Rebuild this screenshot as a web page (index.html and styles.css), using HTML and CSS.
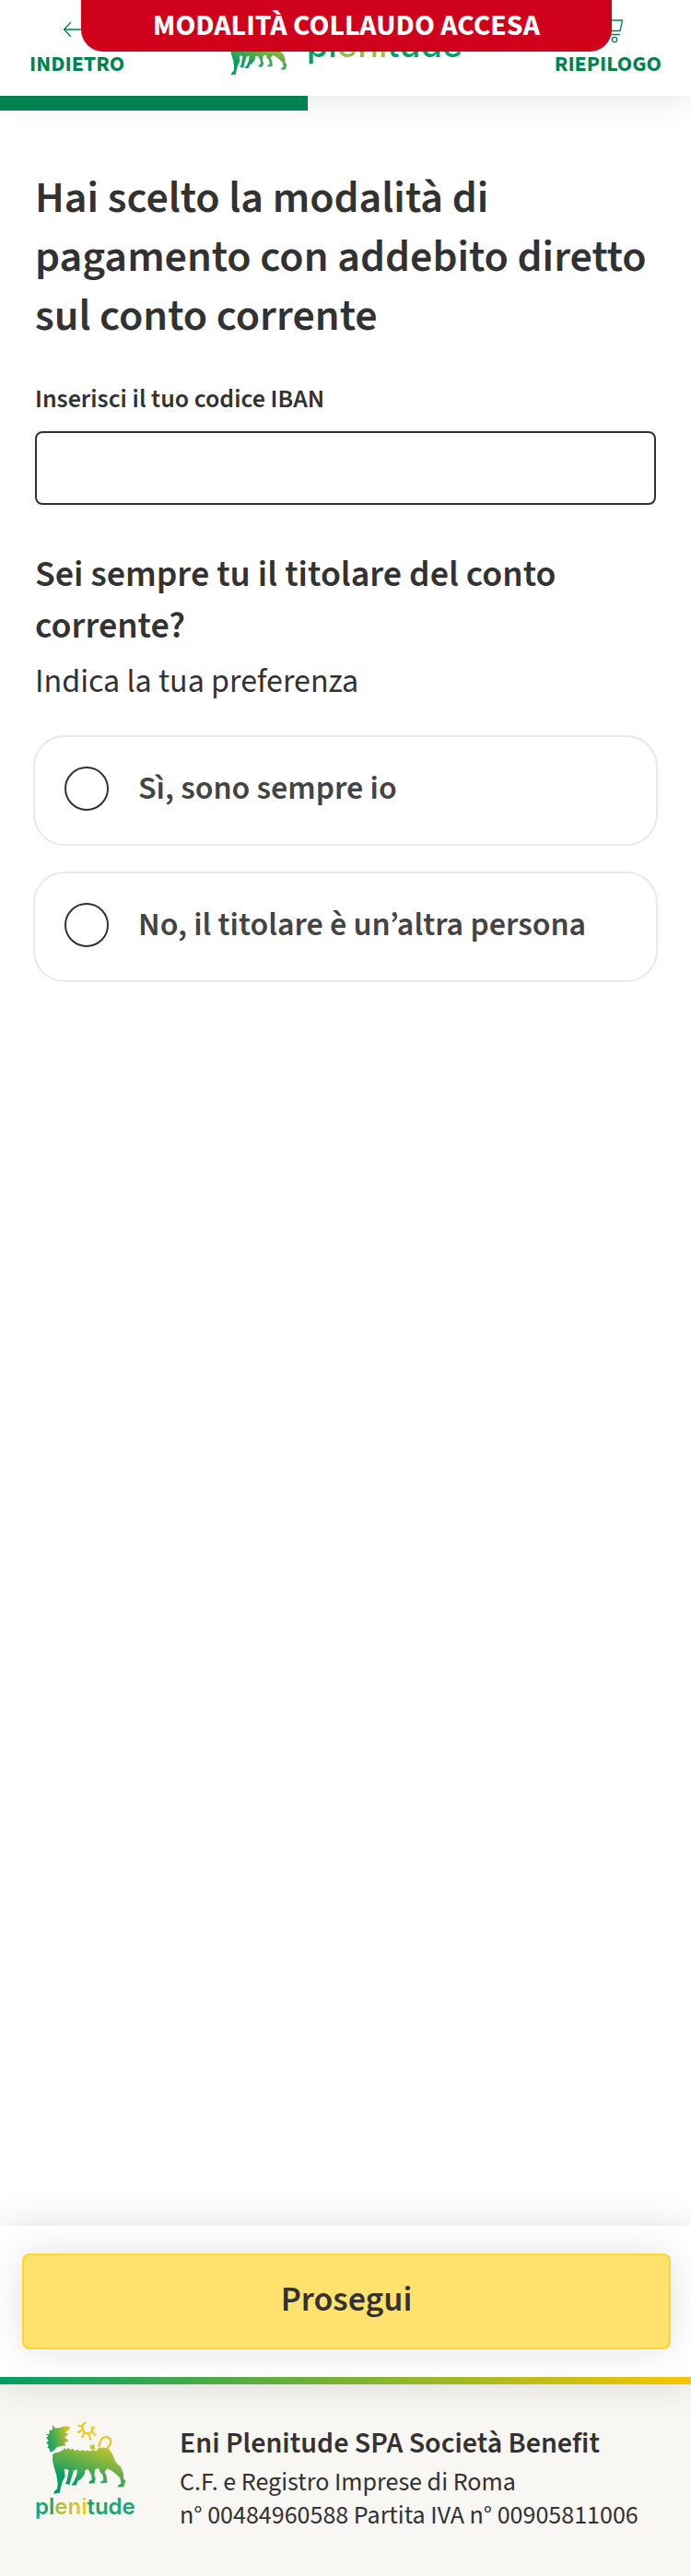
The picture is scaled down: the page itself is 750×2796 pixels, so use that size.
FILE: index.html
```html
<!DOCTYPE html>
<html lang="it">
<head>
<meta charset="utf-8">
<meta name="viewport" content="width=device-width, initial-scale=1">
<title>Plenitude - Modalità di pagamento</title>
<link rel="stylesheet" href="styles.css">
</head>
<body>
<svg class="defs" aria-hidden="true">
  <defs>
    <linearGradient id="body-fill" gradientUnits="userSpaceOnUse" x1="165" y1="275" x2="215" y2="135">
      <stop offset="0" stop-color="#009f65"/><stop offset=".35" stop-color="#4caa52"/><stop offset="1" stop-color="#c9c626"/>
    </linearGradient>
    <linearGradient id="head-fill" gradientUnits="userSpaceOnUse" x1="88" y1="140" x2="165" y2="115">
      <stop offset="0" stop-color="#14a061"/><stop offset=".4" stop-color="#5cae4e"/><stop offset="1" stop-color="#dcc820"/>
    </linearGradient>
    <linearGradient id="flame-fill" gradientUnits="userSpaceOnUse" x1="190" y1="130" x2="245" y2="90">
      <stop offset="0" stop-color="#e0ca2a"/><stop offset="1" stop-color="#f6cd2a"/>
    </linearGradient>
    <symbol id="dog" viewBox="50 80 310 245">
      <path fill="url(#body-fill)" d="M107 190L113 184L128 181L142 174L146 167L152 173L160 167L164 174L174 170L180 177L190 173L196 178L206 174L212 179L222 175L230 178L240 174L250 178L258 168L276 166L292 170L304 190L314 214L332 232L339 250L340 268L347 276L342 290L340 296L320 296L324 289L332 284L328 266L316 254L298 240L286 236L278 246L284 260L286 282L264 284L266 277L274 274L272 258L262 246L258 234L246 238L244 258L248 268L244 284L226 284L228 277L236 272L234 256L224 238L214 240L212 254L202 268L190 276L184 290L168 290L178 276L186 256L188 238L176 242L170 262L166 274L164 288L148 286L154 274L160 240L146 236L148 262L140 276L134 296L130 316L110 318L114 308L122 302L124 286L120 258L112 232L107 210Z"/>
      <path fill="url(#head-fill)" d="M107 92L116 103L130 101L144 97L158 97L165 101L160 108L148 118L160 120L154 128L146 134L156 140L158 146L146 150L150 160L132 162L120 166L112 176L98 182L98 172L90 166L94 158L86 150L94 144L86 134L94 128L85 124L98 120L96 110L106 108Z"/>
      <path fill="none" stroke="#e3c92a" stroke-width="7" d="M259 166C262 142 271 132 282 132C299 132 305 152 286 168"/>
      <path fill="#b9c22f" d="M229 156L237 160L245 154L244 163L248 172L232 172Z"/>
      <path fill="none" stroke="url(#flame-fill)" stroke-width="7" d="M207 88C201 106 209 120 222 120C236 120 242 108 234 98M190 94L206 98M207 90L217 84M188 117L206 109M203 134L213 116M232 142L226 120M249 127L236 115M245 98L237 108"/>
    </symbol>
  </defs>
</svg>

<header class="header">
  <a class="nav-link" href="#indietro">
    <svg class="nav-icon" viewBox="0 0 32 32" aria-hidden="true"><path d="M31 16H2M9 8L1.500 16L9 24"/></svg>
    <span>INDIETRO</span>
  </a>
  <a class="brand" href="#home" aria-label="Plenitude">
    <svg class="brand-dog" aria-hidden="true"><use href="#dog"/></svg>
    <span class="brand-name">pl<span class="brand-mid">eni</span>tude</span>
  </a>
  <a class="nav-link" href="#riepilogo">
    <svg class="nav-icon" viewBox="0 0 32 32" aria-hidden="true"><path d="M0 2H5L6.500 6H31.500L29 17.500H11L6.500 6M11 17.500L9 21.500H29"/><circle cx="23" cy="27" r="2.700"/><circle cx="13" cy="27" r="2.700"/></svg>
    <span>RIEPILOGO</span>
  </a>
  <div class="test-banner">MODALITÀ COLLAUDO ACCESA</div>
</header>
<div class="progress"><div class="progress-value"></div></div>

<main class="content">
  <h1 class="title">Hai scelto la modalità di pagamento con addebito diretto sul conto corrente</h1>
  <label class="field-label" for="iban">Inserisci il tuo codice IBAN</label>
  <input class="field" id="iban" type="text" autocomplete="off">
  <h2 class="question" id="question">Sei sempre tu il titolare del conto corrente?</h2>
  <p class="hint">Indica la tua preferenza</p>
  <div class="options" role="radiogroup" aria-labelledby="question">
    <label class="option"><input class="option-radio" type="radio" name="owner" value="si"><span>Sì, sono sempre io</span></label>
    <label class="option"><input class="option-radio" type="radio" name="owner" value="no"><span>No, il titolare è un’altra persona</span></label>
  </div>
</main>

<div class="action-bar">
  <div class="action-inner"><button class="submit" type="button">Prosegui</button></div>
  <div class="action-stripe"></div>
</div>

<footer class="footer">
  <div class="footer-logo">
    <svg class="footer-dog" aria-hidden="true"><use href="#dog"/></svg>
    <span class="footer-name">pl<span class="brand-mid">eni</span>tude</span>
  </div>
  <div>
    <p class="company">Eni Plenitude SPA Società Benefit</p>
    <p class="company-info">C.F. e Registro Imprese di Roma<br>n° 00484960588 Partita IVA n° 00905811006</p>
  </div>
</footer>
</body>
</html>
```
FILE: styles.css
```css
:root {
  --ink: #323232;
  --green: #008350;
  --shadow: 0 0 40px rgba(0, 0, 0, .12);
}
* { box-sizing: border-box; }
body {
  margin: 0;
  min-height: 100vh;
  display: flex;
  flex-direction: column;
  background: #fff;
  color: var(--ink);
  font-family: "Source Sans 3", "Source Sans Pro", "Noto Sans CJK KR", sans-serif;
}
h1, h2, p { margin: 0; }
.defs { position: absolute; width: 0; height: 0; }

.header {
  position: relative;
  z-index: 1;
  display: flex;
  justify-content: space-between;
  align-items: flex-start;
  height: 104px;
  padding: 16px 32px 0;
  background: #fff;
  box-shadow: var(--shadow);
}
.nav-link {
  display: flex;
  flex-direction: column;
  align-items: center;
  gap: 6px;
  color: var(--green);
  font-size: 24px;
  font-weight: 700;
  line-height: 32px;
  text-decoration: none;
}
.nav-icon {
  width: 32px;
  height: 32px;
  fill: none;
  stroke: currentColor;
  stroke-width: 1.3;
}
.brand {
  display: flex;
  align-items: flex-start;
  gap: 18px;
  padding-top: 4px;
  text-decoration: none;
}
.brand-dog { width: 80px; height: 63px; }
.brand-name {
  padding-top: 4px;
  color: #009f65;
  font: 500 38px/48px Inter, sans-serif;
}
.brand-mid {
  color: transparent;
  background: linear-gradient(90deg, #8db84a, #b2bd3a);
  background-clip: text;
}
.test-banner {
  position: absolute;
  top: 0;
  left: 88px;
  right: 86px;
  height: 56px;
  border-radius: 0 0 24px 24px;
  background: #d0021b;
  color: #fff;
  font-size: 32px;
  font-weight: 700;
  line-height: 56px;
  text-align: center;
}
.progress { height: 16px; position: relative; z-index: 1; }
.progress-value { width: 44.5%; height: 100%; background: var(--green); }

.content {
  flex: 1;
  display: flex;
  flex-direction: column;
  padding: 63px 36px 40px;
}
.title {
  padding: 0 2px;
  font-size: 48px;
  font-weight: 600;
  line-height: 64px;
}
.field-label {
  margin: 40px 2px 0;
  font-size: 28px;
  font-weight: 600;
  line-height: 36px;
}
.field {
  height: 80px;
  margin: 17px 2px 0;
  padding: 0 24px;
  border: 2px solid var(--ink);
  border-radius: 8px;
  background: #fff;
  color: var(--ink);
  font: inherit;
  font-size: 36px;
}
.question {
  margin-top: 48px;
  padding: 0 2px;
  font-size: 40px;
  font-weight: 600;
  line-height: 56px;
}
.hint {
  margin-top: 8px;
  padding: 0 2px;
  font-size: 36px;
  font-weight: 400;
  line-height: 48px;
}
.options { display: grid; gap: 28px; margin-top: 34px; }
.option {
  display: flex;
  align-items: flex-start;
  gap: 32px;
  min-height: 120px;
  padding: 32px;
  border: 2px solid #e9e9e9;
  border-radius: 34px;
  color: #444;
  font-size: 36px;
  font-weight: 600;
  line-height: 48px;
}
.option-radio {
  appearance: none;
  flex: none;
  width: 48px;
  height: 48px;
  margin: 0;
  border: 2px solid var(--ink);
  border-radius: 50%;
  background: #fff;
}
.option-radio:checked { box-shadow: inset 0 0 0 10px #fff; background: var(--green); }

.action-bar {
  position: relative;
  z-index: 1;
  background: #fff;
  box-shadow: var(--shadow);
}
.action-inner { padding: 30px 22px 30px 24px; }
.action-stripe {
  position: relative;
  height: 8px;
  background: linear-gradient(90deg, #009f65, #f7c600);
}
.submit {
  display: block;
  width: 100%;
  height: 104px;
  padding: 0 0 4px;
  border: 2px solid #ffd42e;
  border-radius: 8px;
  background: #ffe26e;
  box-shadow: var(--shadow);
  color: var(--ink);
  font: inherit;
  font-size: 38px;
  font-weight: 600;
}
.footer {
  display: flex;
  gap: 49px;
  padding: 40px 38px 48px;
  background: #f9f7f4;
}
.footer-logo { display: flex; flex-direction: column; flex: none; width: 108px; }
.footer-dog { width: 103px; height: 81px; }
.footer-name {
  color: #1ba572;
  font: 600 24px/24px Inter, sans-serif;
}
.footer-name .brand-mid { background-image: linear-gradient(90deg, #9dbb45, #f0cb24); }
.company { font-size: 32px; font-weight: 600; line-height: 48px; }
.company-info { font-size: 28px; font-weight: 400; line-height: 36px; }
```
